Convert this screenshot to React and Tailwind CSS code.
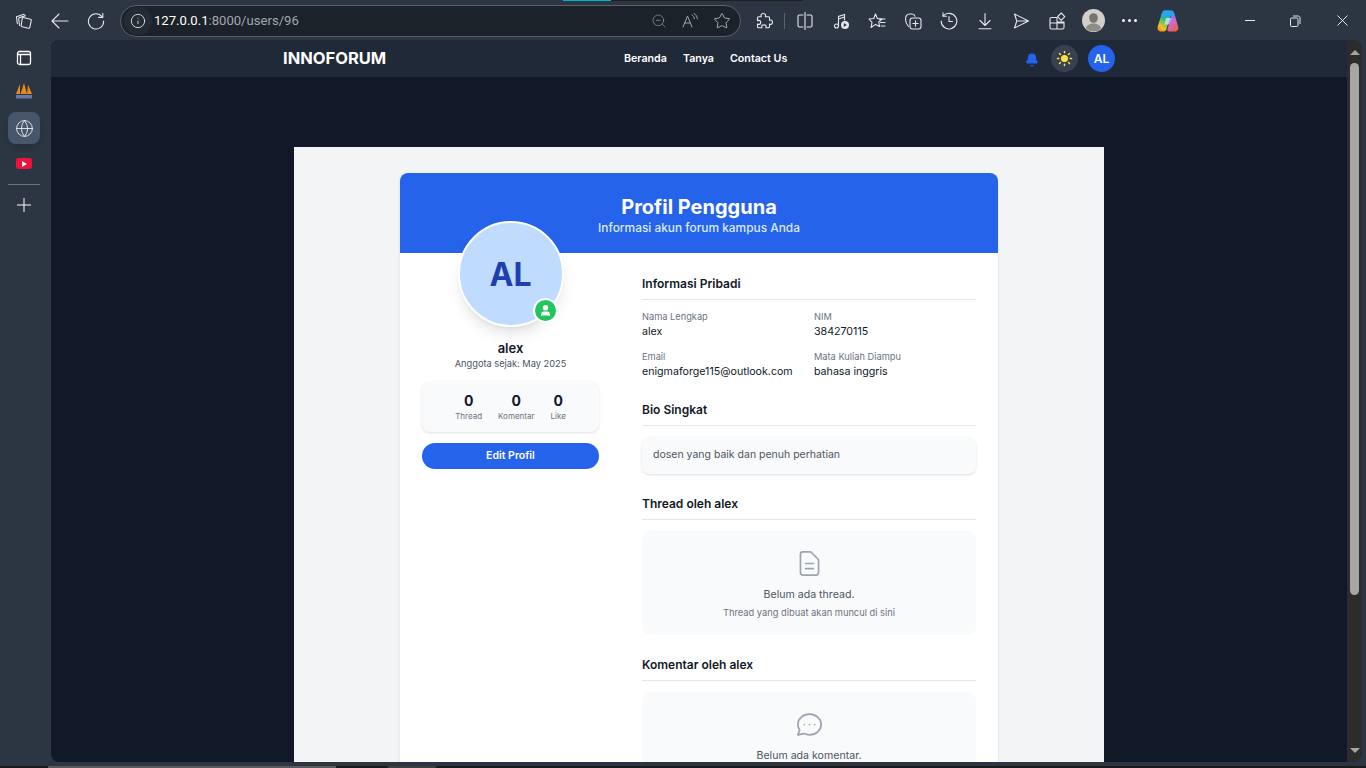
import React from 'react';
import { Info, ZoomOut, Star, Globe, Bell, Sun, User } from 'lucide-react';

const font = "font-['Inter','Liberation_Sans',sans-serif]";

const Glyph = ({ children, size = 18, color = '#e5e7eb', sw = 1.1 }) => (
  <svg width={size} height={size} viewBox="0 0 18 18" fill="none" stroke={color} strokeWidth={sw} strokeLinecap="round" strokeLinejoin="round">
    {children}
  </svg>
);

const TabsIcon = () => (
  <Glyph size={18}>
    <path d="M8 5.500 15.500 7.200c.6.100.9.600.8 1.200l-1.500 7c-.1.600-.6.900-1.200.8L7 14.700c-.6-.1-.9-.6-.8-1.200l1-7.200c.1-.6.300-.9.800-.8z" />
    <path d="M4.500 13.500 3.700 6.800c-.1-.6.200-1 .8-1.200l6-1.800" />
    <path d="M2.300 11.500 1.500 5.500c-.1-.5.200-1 .7-1.100l6-1.900c.5-.2 1 0 1.200.5" />
  </Glyph>
);

const BackIcon = () => (
  <Glyph size={18} sw={1.1}>
    <path d="M17 9H1M8 2 1 9l7 7" />
  </Glyph>
);

const ReloadIcon = () => (
  <Glyph size={18} sw={1.1}>
    <path d="M15.200 5A7.600 7.600 0 1 0 16.600 9" />
    <path d="M15.800 1.200V5.400H11.600" />
  </Glyph>
);

const SidebarIcon = () => (
  <svg width="16" height="16" viewBox="0 0 16 16" fill="none" stroke="#fff" strokeWidth="1.3">
    <rect x="1.500" y="1.500" width="13" height="13" rx="2" />
    <path d="M1.500 4.500h13M4.500 4.500v10" />
  </svg>
);

const ReadAloud = () => (
  <Glyph color="#9ca3af" sw={1}>
    <path d="M2 15 6.500 4 11 15M3.800 11h5.400" />
    <path d="M11 3c1.500.8 2.200 2 2.300 3.600M13 1.500c2 1 3.300 3 3.300 5.300" />
  </Glyph>
);

const PuzzleIcon = () => (
  <Glyph>
    <path d="M6 3.500c0-1.200 1-2 2.300-2s2.300.8 2.300 2c0 .5-.2.800-.3 1.200h3.200c.6 0 1 .4 1 1v2.600c.4-.2.800-.3 1.200-.3 1 0 1.700 1 1.700 2.200s-.7 2.200-1.700 2.200c-.4 0-.8-.1-1.200-.3v2.700c0 .6-.4 1-1 1h-2.700c.2-.4.300-.8.300-1.200 0-1-1-1.700-2.200-1.700s-2.200.7-2.200 1.700c0 .4.100.8.300 1.200H3.500c-.6 0-1-.4-1-1v-2.700c.4.200.8.300 1.200.3 1.100 0 2-.9 2-2s-.9-2-2-2c-.4 0-.8.100-1.200.3V5.700c0-.6.400-1 1-1h2.800C6.200 4.300 6 4 6 3.500z" />
  </Glyph>
);

const SplitIcon = () => (
  <Glyph>
    <path d="M7 3H3.500C2.700 3 2 3.700 2 4.500v9c0 .8.700 1.500 1.500 1.500H7M11 3h3.500c.8 0 1.500.7 1.500 1.500v9c0 .8-.7 1.500-1.500 1.500H11" />
    <path d="M9 .5v17" />
  </Glyph>
);

const MusicIcon = () => (
  <svg width="18" height="18" viewBox="0 0 18 18" fill="none" stroke="#e5e7eb" strokeWidth="1.100">
    <circle cx="4.500" cy="14" r="2" />
    <path d="M6.500 14V4.500l6-2v6" />
    <path d="M6.500 7l6-2" />
    <circle cx="13" cy="13" r="4" fill="#e5e7eb" stroke="none" />
    <path d="M11.800 11v4l3-2z" fill="#2b3642" stroke="none" />
  </svg>
);

const FavList = () => (
  <Glyph>
    <path d="M7.500 2 9.300 6.400l-.1.100L14 7 10.800 10 11.500 14.500 7.500 12.400 3 15.500l1-5.200L1 7l4.700-.5z" />
    <path d="M11 7h6M12.500 10.500H17M13 14h4" />
  </Glyph>
);

const Collections = () => (
  <Glyph>
    <path d="M4.500 14.500C2.700 12.500 1.500 10 1.500 7c0-3 1.500-5 4-5h2.500c1.500 0 2.500.8 3 2.200" />
    <rect x="6" y="6" width="11" height="11" rx="2.500" />
    <path d="M11.500 8.800v5.400M8.800 11.500h5.400" />
  </Glyph>
);

const HistoryIcon = () => (
  <Glyph>
    <path d="M3.300 3.800A7.800 7.800 0 1 1 1.200 9" />
    <path d="M3 .8v3.400h3.400" />
    <path d="M9 4.500V9.500h3.500" />
  </Glyph>
);

const DownloadIcon = () => (
  <Glyph>
    <path d="M9 1.500v11.500M4 8.500 9 13.500l5-5M3 16.800h12" />
  </Glyph>
);

const SendIcon = () => (
  <Glyph>
    <path d="M2.500 2 16.500 9 2.500 16 4.800 9zM4.800 9h11.700" />
  </Glyph>
);

const Workspaces = () => (
  <Glyph>
    <path d="M9 5.500H3.500c-.8 0-1.500.7-1.500 1.500v8.500c0 .8.700 1.500 1.500 1.500h11c.8 0 1.500-.7 1.500-1.500V10H9zM9 17V5.500M2 11h14" />
    <path d="M13.200 1 16.800 4.700 13.200 8.300 9.600 4.700z" />
  </Glyph>
);

const RestoreIcon = () => (
  <svg width="12" height="12" viewBox="0 0 12 12" fill="none" stroke="#e5e7eb" strokeWidth="1">
    <rect x="1.500" y="3" width="7.500" height="8.500" rx="1.200" />
    <path d="M4 1h5c1.200 0 2 .8 2 2v6" />
  </svg>
);

const ProfilePic = () => (
  <svg width="23" height="23" viewBox="0 0 23 23">
    <circle cx="11.500" cy="11.500" r="11.500" fill="#d2cfca" />
    <ellipse cx="11.500" cy="9" rx="4.300" ry="4.800" fill="#77736f" />
    <path d="M3.800 19.500c1-3.500 4-5 7.700-5s6.700 1.500 7.700 5a11.500 11.500 0 0 1-15.400 0z" fill="#8f8b86" />
  </svg>
);

const Copilot = () => (
  <svg width="24" height="24" viewBox="0 0 24 24">
    <defs>
      <linearGradient id="cpa" x1="0.700" y1="0" x2="0.200" y2="1">
        <stop offset="0" stopColor="#1f9de8" />
        <stop offset="0.450" stopColor="#35c07c" />
        <stop offset="0.800" stopColor="#f4c21c" />
        <stop offset="1" stopColor="#f08a2c" />
      </linearGradient>
      <linearGradient id="cpb" x1="0.300" y1="0" x2="0.700" y2="1">
        <stop offset="0" stopColor="#3b82f6" />
        <stop offset="0.500" stopColor="#c86be0" />
        <stop offset="1" stopColor="#f0603c" />
      </linearGradient>
    </defs>
    <path d="M9 1.500h5c1.500 0 2 1 1.600 2.300L10.500 20c-.5 1.600-1.500 2.500-3 2.500H5C2.200 22.500 1 20 1.800 17.500L5.600 5C6.300 2.800 7.300 1.500 9 1.500z" fill="url(#cpa)" />
    <path d="M15 1.500c1.700 0 2.800 1.200 3.400 3.300l3.700 12.700c.8 2.600-.4 5-3.200 5h-5.800c-1.400 0-2-1-1.600-2.400l3-9.600z" fill="url(#cpb)" />
    <path d="M8.500 1.500h6.500c1.700 0 2.800 1.200 3.400 3.300l.5 2H12L6 9l-.5-3C6.200 3 7.300 1.500 8.500 1.500z" fill="#2aa3ee" />
    <path d="M10 9h5.500L13 15.500H8.300z" fill="#e9ecfb" opacity="0.700" />
  </svg>
);

const Sails = () => (
  <svg width="16" height="16" viewBox="0 0 16 16">
    <path d="M0 11 4 1v10zM4.500 11 8 0l3 11zM11 11l1-9 4 9z" fill="#ea8a1e" />
    <rect x="0" y="12" width="16" height="3.500" fill="#6a76a6" />
  </svg>
);

const ToolCell = ({ children }) => <div className="w-9 flex justify-center">{children}</div>;

const BrowserBar = () => (
  <div className="h-10 shrink-0 bg-[#2b3642] flex flex-col">
    <div className="h-px flex shrink-0">
      <div className="w-[563px]" />
      <div className="w-12 bg-[#00b7c3]" />
      <div className="w-[192px] bg-[#1f1f1f]" />
    </div>
    <div className="flex-1 flex items-center">
      <div className="ml-[15px]"><TabsIcon /></div>
      <div className="ml-[18px]"><BackIcon /></div>
      <div className="ml-[18px]"><ReloadIcon /></div>
      <div className="ml-[15px] w-[621px] h-8 rounded-full bg-[#1b222a] border border-[#5b6169] flex items-center pl-[3px] pr-[9px]">
        <span className="w-7 h-7 rounded-full bg-[#232b33] flex items-center justify-center">
          <Info size={16} strokeWidth={1.3} className="text-gray-200" />
        </span>
        <span className="ml-[2px] text-[13.100px] font-['Roboto','Liberation_Sans',sans-serif] text-white">127.0.0.1</span>
        <span className="text-[13.100px] font-['Roboto','Liberation_Sans',sans-serif] text-[#a3a8ae]">:8000/users/96</span>
        <div className="ml-auto flex items-center gap-[14px]">
          <ZoomOut size={16} strokeWidth={1} className="text-gray-400" />
          <ReadAloud />
          <Star size={18} strokeWidth={1} className="text-gray-300" />
        </div>
      </div>
      <div className="ml-[14px]"><PuzzleIcon /></div>
      <div className="w-px h-4 bg-[#59626c] ml-[11px]" />
      <div className="ml-[2px] flex items-center">
        <ToolCell><SplitIcon /></ToolCell>
        <ToolCell><MusicIcon /></ToolCell>
        <ToolCell><FavList /></ToolCell>
        <ToolCell><Collections /></ToolCell>
        <ToolCell><HistoryIcon /></ToolCell>
        <ToolCell><DownloadIcon /></ToolCell>
        <ToolCell><SendIcon /></ToolCell>
        <ToolCell><Workspaces /></ToolCell>
        <ToolCell><ProfilePic /></ToolCell>
        <ToolCell>
          <div className="flex gap-[3px]">
            <span className="w-[3px] h-[3px] rounded-full bg-gray-100" />
            <span className="w-[3px] h-[3px] rounded-full bg-gray-100" />
            <span className="w-[3px] h-[3px] rounded-full bg-gray-100" />
          </div>
        </ToolCell>
      </div>
      <div className="ml-[9px]"><Copilot /></div>
      <div className="ml-[65px] w-[10px] h-px bg-gray-200" />
      <div className="ml-[34px]"><RestoreIcon /></div>
      <svg width="11" height="11" viewBox="0 0 11 11" stroke="#e5e7eb" strokeWidth="1" className="ml-[36px]">
        <path d="M.5.5l10 10M10.500.5l-10 10" />
      </svg>
    </div>
  </div>
);

const Rail = () => (
  <div className="w-[51px] shrink-0 bg-[#2b3642] flex flex-col items-center pr-[3px]">
    <div className="h-9 flex items-center"><SidebarIcon /></div>
    <div className="h-[36px] flex items-center pb-[6px]"><Sails /></div>
    <div className="w-8 h-8 rounded-lg bg-[#47566b] shadow-md flex items-center justify-center">
      <Globe size={19} strokeWidth={1} className="text-white" />
    </div>
    <div className="h-[39px] flex items-center">
      <div className="w-4 h-[11px] rounded-[3px] bg-[#f0123c] flex items-center justify-center">
        <span className="border-l-[5px] border-l-white border-y-[3px] border-y-transparent" />
      </div>
    </div>
    <div className="w-8 h-px bg-[#6b7480] mt-[1px]" />
    <svg width="14" height="14" viewBox="0 0 14 14" stroke="#fff" strokeWidth="1" className="mt-[13px]">
      <path d="M7 0v14M0 7h14" />
    </svg>
  </div>
);

const Navbar = () => (
  <nav className="h-[37px] shrink-0 bg-[#1f2937]">
    <div className="w-[832px] h-full mx-auto flex items-center justify-between">
      <span className="text-[16.500px] font-bold text-white">INNOFORUM</span>
      <div className="flex gap-4 pt-[1px] text-[10.700px] font-semibold text-white">
        <span>Beranda</span>
        <span>Tanya</span>
        <span>Contact Us</span>
      </div>
      <div className="flex items-center">
        <Bell size={14} fill="#2563eb" className="text-[#2563eb] mt-[2px]" />
        <span className="ml-[12px] w-[27px] h-[27px] rounded-full bg-[#374151] flex items-center justify-center">
          <Sun size={17} fill="#fde047" className="text-[#fde047]" />
        </span>
        <span className="ml-[10px] w-[27px] h-[27px] rounded-full bg-[#2563eb] text-white text-xs font-semibold flex items-center justify-center">AL</span>
      </div>
    </div>
  </nav>
);

const SectionTitle = ({ children }) => (
  <h2 className="text-xs font-semibold text-[#111827] pb-2 border-b border-[#e5e7eb] leading-[15px]">{children}</h2>
);

const Field = ({ label, value }) => (
  <div>
    <div className="text-[9.250px] leading-[11px] text-[#6b7280]">{label}</div>
    <div className="text-[10.650px] leading-[13px] text-[#111827] mt-[3px]">{value}</div>
  </div>
);

const Stat = ({ value, label }) => (
  <div className="text-center">
    <div className="text-sm font-bold text-[#111827] leading-[18px]">{value}</div>
    <div className="text-[8px] leading-[12px] text-[#6b7280]">{label}</div>
  </div>
);

const Empty = ({ icon, title, sub }) => (
  <div className="mt-[11px] rounded-lg bg-[#f9fafb] pt-[17px] pb-[16px] flex flex-col items-center">
    {icon}
    <p className="text-[10.600px] text-[#4b5563] mt-[9px] leading-[14px]">{title}</p>
    {sub && <p className="text-[9.300px] text-[#6b7280] mt-[5px] leading-[12px]">{sub}</p>}
  </div>
);

const DocIcon = () => (
  <svg width="31" height="31" viewBox="0 0 24 24" fill="none" stroke="#9ca3af" strokeWidth="1.300" strokeLinecap="round" strokeLinejoin="round">
    <path d="M9 12h6m-6 4h6m2 5H7a2 2 0 0 1-2-2V5a2 2 0 0 1 2-2h5.586a1 1 0 0 1 .707.293l5.414 5.414a1 1 0 0 1 .293.707V19a2 2 0 0 1-2 2z" />
  </svg>
);

const ChatIcon = () => (
  <svg width="31" height="31" viewBox="0 0 24 24" fill="none" stroke="#9ca3af" strokeWidth="1.300" strokeLinecap="round" strokeLinejoin="round">
    <path d="M8 12h.01M12 12h.01M16 12h.01M21 12c0 4.418-4.030 8-9 8a9.863 9.863 0 0 1-4.255-.949L3 20l1.395-3.720C3.512 15.042 3 13.574 3 12c0-4.418 4.030-8 9-8s9 3.582 9 8z" />
  </svg>
);

const Card = () => (
  <div className="w-[598px] mx-auto mt-[26px] bg-white rounded-t-lg shadow-sm flex-1">
    <header className="h-20 bg-[#2563eb] rounded-t-lg text-center text-white pt-[21px]">
      <h1 className="text-xl font-bold leading-[26px]">Profil Pengguna</h1>
      <p className="text-[11.900px] font-medium text-[#dbeafe] leading-[16px]">Informasi akun forum kampus Anda</p>
    </header>
    <div className="flex px-[22px]">
      <aside className="w-[177px] shrink-0 flex flex-col items-center">
        <div className="relative -mt-8 w-[106px] h-[106px] rounded-full bg-[#bfdbfe] border-2 border-white shadow-lg flex items-center justify-center">
          <span className="text-[32px] font-bold text-[#1e40af] pt-[2px]">AL</span>
          <span className="absolute right-[4px] bottom-[2px] w-[25px] h-[25px] rounded-full bg-[#22c55e] border-2 border-white flex items-center justify-center">
            <User size={13} fill="#fff" className="text-white" />
          </span>
        </div>
        <p className="mt-[13px] text-[13px] font-semibold text-[#111827] leading-[16px]">alex</p>
        <p className="mt-[1px] text-[9.250px] text-[#4b5563] leading-[14px]">Anggota sejak: May 2025</p>
        <div className="mt-[10px] w-full h-[51px] rounded-lg bg-[#f9fafb] shadow-sm flex items-center justify-center gap-4 pt-[1px]">
          <Stat value="0" label="Thread" />
          <Stat value="0" label="Komentar" />
          <Stat value="0" label="Like" />
        </div>
        <button className="mt-[11px] w-full h-[26px] rounded-full bg-[#2563eb] text-white text-[10.500px] font-semibold">Edit Profil</button>
      </aside>
      <main className="ml-[43px] w-[334px] pt-[23px]">
        <SectionTitle>Informasi Pribadi</SectionTitle>
        <div className="grid grid-cols-[172px_1fr] gap-y-[13px] mt-[11px]">
          <Field label="Nama Lengkap" value="alex" />
          <Field label="NIM" value="384270115" />
          <Field label="Email" value="enigmaforge115@outlook.com" />
          <Field label="Mata Kuliah Diampu" value="bahasa inggris" />
        </div>
        <div className="mt-[24px]"><SectionTitle>Bio Singkat</SectionTitle></div>
        <div className="mt-[11px] rounded-lg bg-[#f9fafb] shadow-sm px-[11px] pb-[2px] h-[37px] flex items-center text-[10.500px] text-[#4b5563]">dosen yang baik dan penuh perhatian</div>
        <div className="mt-[22px]"><SectionTitle>Thread oleh alex</SectionTitle></div>
        <Empty icon={<DocIcon />} title="Belum ada thread." sub="Thread yang dibuat akan muncul di sini" />
        <div className="mt-[22px]"><SectionTitle>Komentar oleh alex</SectionTitle></div>
        <Empty icon={<ChatIcon />} title="Belum ada komentar." />
      </main>
    </div>
  </div>
);

const Scrollbar = () => (
  <div className="w-[15px] shrink-0 bg-[#2c2c2c] flex flex-col items-center rounded-tr-lg rounded-br-lg">
    <span className="mt-[10px] border-b-[5px] border-b-[#a6a6a6] border-x-[5px] border-x-transparent" />
    <div className="mt-2 w-[9px] h-[532px] rounded-full bg-[#a6a6a6]" />
    <span className="mt-auto mb-[9px] border-t-[5px] border-t-[#a6a6a6] border-x-[5px] border-x-transparent" />
  </div>
);

const BottomStrip = () => (
  <div className="h-[2px] shrink-0 flex bg-[#1a1a1a]">
    <div className="ml-12 w-72 bg-[#5a5a5a]" />
    <div className="ml-[52px] w-12 bg-[#3f3f3f]" />
  </div>
);

export default function App() {
  return (
    <div className={`h-screen overflow-hidden flex flex-col bg-[#2b3642] ${font}`}>
      <BrowserBar />
      <div className="h-[722px] flex shrink-0">
        <Rail />
        <div className="flex flex-1 min-w-0 pr-1">
          <div className="flex-1 min-w-0 flex flex-col bg-[#111827] rounded-tl-lg rounded-bl-lg overflow-hidden">
            <Navbar />
            <div className="flex-1 min-h-0 pt-[70px] flex">
              <div className="w-[810px] mx-auto bg-[#f3f4f6] flex flex-col overflow-hidden">
                <Card />
              </div>
            </div>
          </div>
          <Scrollbar />
        </div>
      </div>
      <div className="h-1 shrink-0 bg-[#2b3642]" />
      <BottomStrip />
    </div>
  );
}
